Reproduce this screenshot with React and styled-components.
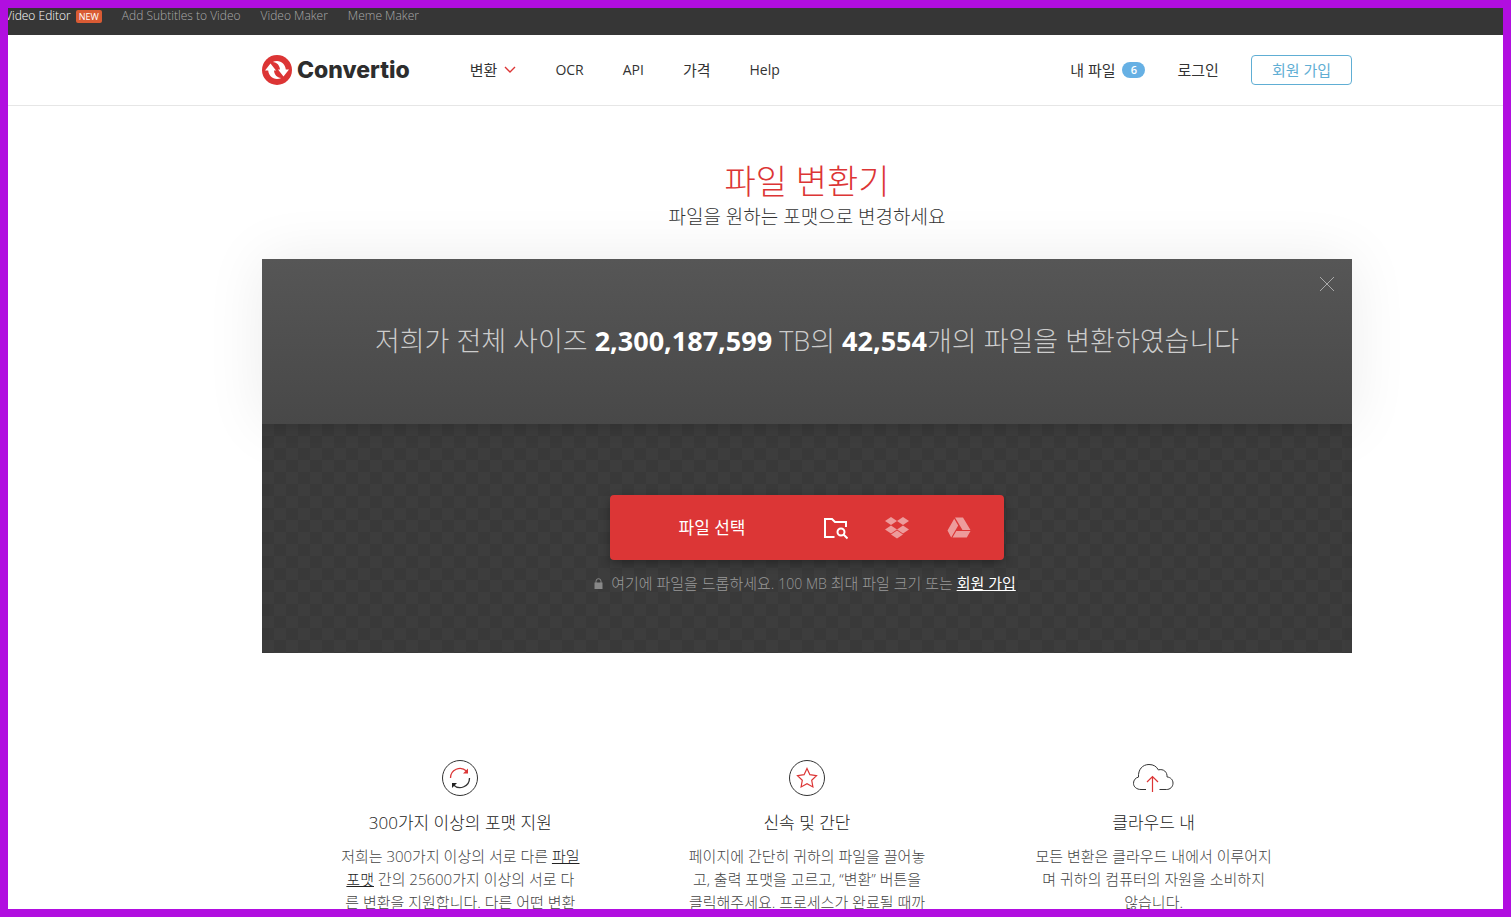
import React from 'react';
import styled, { createGlobalStyle } from 'styled-components';

const GlobalStyle = createGlobalStyle`
  * {
    box-sizing: border-box;
  }
  body {
    margin: 0;
    color: #333;
    background: #fff;
    font-family: 'Open Sans', 'Noto Sans CJK KR', sans-serif;
    font-size: 14px;
    font-weight: 300;
  }
  a {
    color: inherit;
    text-decoration: none;
  }
  h1, h2, h3, p {
    margin: 0;
    font-weight: 300;
  }
  button {
    padding: 0;
    border: 0;
    background: none;
    color: inherit;
    font: inherit;
    cursor: pointer;
  }
`;

const Frame = styled.div`
  height: 100vh;
  overflow: hidden;
  border: 8px solid #b10ee0;
`;

const TopBar = styled.nav`
  display: flex;
  align-items: flex-start;
  gap: 20px;
  height: 27px;
  padding-left: 5px;
  margin-left: -8px;
  background: #363636;
  font-size: 12px;
  line-height: 16px;
`;

const TopLink = styled.a`
  display: flex;
  align-items: center;
  gap: 5px;
  color: ${(props) => (props.$active ? '#fff' : '#aaa')};
`;

const NewBadge = styled.span`
  padding: 0 3px;
  border-radius: 2px;
  background: #d95b34;
  color: #fff;
  font-size: 9px;
  font-weight: 500;
  line-height: 13px;
`;

const Header = styled.header`
  padding-left: 103px;
  border-bottom: 1px solid #e6e6e6;
`;

const Container = styled.div`
  width: 100%;
  max-width: 1090px;
  margin: 0 auto;
`;

const HeaderRow = styled(Container)`
  display: flex;
  align-items: center;
  height: 70px;
  font-weight: 400;
`;

const Logo = styled.a`
  display: flex;
  align-items: center;
  gap: 5px;
  margin-right: 60px;
  color: #2d2d2d;
  font-family: Inter, sans-serif;
  font-size: 23px;
  font-weight: 800;
  line-height: 30px;
`;

const Menu = styled.nav`
  display: flex;
  flex: 1;
  align-items: center;
  gap: 39px;
`;

const MenuLink = styled.a`
  display: flex;
  align-items: center;
  gap: 7px;
  font-size: ${(props) => (props.$hangul ? '15px' : '14px')};
  line-height: 18px;
`;

const Account = styled.div`
  display: flex;
  align-items: center;
  gap: 32px;
`;

const CountBadge = styled.span`
  width: 23px;
  border-radius: 8px;
  background: #66b0e4;
  color: #fff;
  font-size: 11px;
  font-weight: 600;
  line-height: 16px;
  text-align: center;
`;

const SignUp = styled.a`
  padding: 0 20px;
  border: 1px solid #60aed4;
  border-radius: 4px;
  color: #60aed4;
  font-size: 15px;
  line-height: 28px;
`;

const Content = styled.main`
  padding-left: 103px;
`;

const Intro = styled.section`
  padding: 50px 0 31px;
  text-align: center;
`;

const Title = styled.h1`
  color: #dc3535;
  font-size: 34px;
  line-height: 50px;
`;

const Subtitle = styled.p`
  color: #333;
  font-size: 19px;
  line-height: 22px;
`;

const Stats = styled.section`
  position: relative;
  z-index: 1;
  padding: 62px 0 63px;
  background: linear-gradient(#565656, #484848);
  box-shadow: 0 0 60px rgba(0, 0, 0, 0.08);
  color: #ccc;
  font-size: 27px;
  line-height: 40px;
  text-align: center;

  strong {
    color: #fff;
    font-weight: 700;
  }
`;

const CloseButton = styled.button`
  position: absolute;
  top: 17px;
  right: 17px;
  display: flex;
`;

const Converter = styled.section`
  position: relative;
  z-index: 2;
  display: flex;
  flex-direction: column;
  align-items: center;
  padding: 71px 0 58px;
  background: repeating-conic-gradient(#393939 0% 25%, #3d3d3d 0% 50%) 0 0 / 24px 24px;
  box-shadow: inset 0 12px 16px -8px rgba(0, 0, 0, 0.15);
`;

const Picker = styled.div`
  display: flex;
  align-items: center;
  width: 394px;
  height: 65px;
  margin-bottom: 12px;
  border-radius: 4px;
  background: #dc3636;
  box-shadow: 0 4px 10px rgba(0, 0, 0, 0.3);
  color: #fff;
`;

const PickButton = styled.button`
  flex: 1;
  height: 100%;
  padding: 0 0 2px 10px;
  font-size: 17px;
  font-weight: 400;
`;

const SourceButton = styled.button`
  display: flex;
  align-items: center;
  justify-content: center;
  width: 62px;
  height: 100%;
  opacity: ${(props) => (props.$active ? 1 : 0.5)};

  &:last-child {
    margin-right: 14px;
  }
`;

const DropNote = styled.p`
  display: flex;
  align-items: center;
  gap: 8px;
  height: 23px;
  padding-right: 4px;
  color: #999;
  font-size: 15px;
  line-height: 23px;

  a {
    color: #fff;
    font-weight: 400;
    text-decoration: underline;
  }
`;

const SizeLimit = styled.span`
  font-size: 14px;
`;

const Features = styled(Container)`
  display: grid;
  grid-template-columns: repeat(3, 1fr);
  padding: 107px 25px 0;
  text-align: center;
`;

const Feature = styled.article`
  display: flex;
  flex-direction: column;
  align-items: center;
`;

const FeatureTitle = styled.h3`
  margin: 15px 0 10px;
  color: #222;
  font-size: 17px;
  line-height: 24px;
`;

const FeatureText = styled.p`
  color: #444;
  font-size: 15px;
  line-height: 23px;
  white-space: nowrap;

  a {
    color: #222;
    text-decoration: underline;
  }
`;

const LogoIcon = () => (
  <svg width="30" height="30" viewBox="0 0 30 30">
    <circle cx="15" cy="15" r="15" fill="#dc3535" />
    <path
      fill="#fff"
      d="M8.500 8.500 3 15.500h3.200c.4 4.800 4 8.500 8.800 8.500 1.600 0 3-.4 4.200-1-4.200-.4-7-3.400-7.200-7.500H14zM21.500 21.500 27 14.500h-3.200C23.400 9.700 19.800 6 15 6c-1.600 0-3 .4-4.200 1 4.200.4 7 3.400 7.200 7.500H16z"
    />
  </svg>
);

const ChevronIcon = () => (
  <svg width="12" height="8" viewBox="0 0 12 8" fill="none" stroke="#dc3535" strokeWidth="1.4">
    <path d="m1 1 5 5 5-5" />
  </svg>
);

const CloseIcon = () => (
  <svg width="16" height="16" viewBox="0 0 16 16" stroke="#aaa">
    <path d="m1 1 14 14M15 1 1 15" />
  </svg>
);

const FolderIcon = () => (
  <svg width="26" height="24" viewBox="0 0 26 24" fill="none" stroke="#fff" strokeWidth="2">
    <path d="M12.500 21H3V3h7l3 3h11v5" />
    <circle cx="19" cy="16" r="3.500" />
    <path d="m21.500 18.500 4 4" />
  </svg>
);

const DropboxIcon = () => (
  <svg width="26" height="22" viewBox="0 0 26 22" fill="#fff">
    <path d="m7 0 6 4-6 4-6-4zM19 0l6 4-6 4-6-4zM7 8.500l6 4-6 4-6-4zM19 8.500l6 4-6 4-6-4zM13 13.500l6 4-6 4-6-4z" />
  </svg>
);

const DriveIcon = () => (
  <svg width="24" height="21" viewBox="0 0 24 21" fill="#fff">
    <path d="M8 .5h8l7.500 12.500h-8zM7.200 1.700l4 6.800L4.200 20.500.5 13.500zM9.300 14H23.500l-3.700 6.500H5.500z" />
  </svg>
);

const LockIcon = () => (
  <svg width="9" height="11" viewBox="0 0 9 11">
    <path d="M2 5V3.200a2.500 2.500 0 0 1 5 0V5" fill="none" stroke="#888" />
    <path d="M.5 4.500h8V11h-8z" fill="#888" />
  </svg>
);

const FormatsIcon = () => (
  <svg width="36" height="36" viewBox="0 0 36 36" fill="none">
    <circle cx="18" cy="18" r="17.500" stroke="#333" />
    <path d="M8.500 18a9.500 9.500 0 0 1 16-7" stroke="#dc3535" strokeWidth="1.3" />
    <path d="M26 8.500V13.500h-5z" fill="#dc3535" />
    <path d="M27.500 18a9.500 9.500 0 0 1-16 7" stroke="#333" strokeWidth="1.3" />
    <path d="M10 28v-5h5z" fill="#222" />
  </svg>
);

const StarIcon = () => (
  <svg width="36" height="36" viewBox="0 0 36 36" fill="none">
    <circle cx="18" cy="18" r="17.500" stroke="#333" />
    <path
      d="m18 8.500 2.900 6.200 6.600.9-4.800 4.700 1.200 6.700-5.900-3.200-5.900 3.200 1.200-6.700-4.800-4.700 6.600-.9z"
      stroke="#dc3535"
      strokeWidth="1.2"
    />
  </svg>
);

const CloudIcon = () => (
  <svg width="42" height="36" viewBox="0 0 42 36" fill="none">
    <path
      d="M13 29.500H8C3.800 29.500.5 27 .5 23.300c0-3.300 2.200-5.600 5-6.200C5 9.500 9.500 4.500 16 4.500c4.500 0 7.700 2 9.300 5.400 5.200-1.400 9.200 2.200 8.700 7 3.600.4 6 2.900 6 6.200 0 3.900-3 6.400-6.500 6.400h-7"
      stroke="#333"
    />
    <path d="M19.500 32V16.500M14 22l5.500-5.500L25 22" stroke="#dc3535" strokeWidth="1.2" />
  </svg>
);

export default function App() {
  return (
    <Frame>
      <GlobalStyle />
      <TopBar>
        <TopLink href="#" $active>
          Video Editor <NewBadge>NEW</NewBadge>
        </TopLink>
        <TopLink href="#">Add Subtitles to Video</TopLink>
        <TopLink href="#">Video Maker</TopLink>
        <TopLink href="#">Meme Maker</TopLink>
      </TopBar>
      <Header>
        <HeaderRow>
          <Logo href="#">
            <LogoIcon />
            Convertio
          </Logo>
          <Menu>
            <MenuLink href="#" $hangul>
              변환
              <ChevronIcon />
            </MenuLink>
            <MenuLink href="#">OCR</MenuLink>
            <MenuLink href="#">API</MenuLink>
            <MenuLink href="#" $hangul>
              가격
            </MenuLink>
            <MenuLink href="#">Help</MenuLink>
          </Menu>
          <Account>
            <MenuLink href="#" $hangul>
              내 파일 <CountBadge>6</CountBadge>
            </MenuLink>
            <MenuLink href="#" $hangul>
              로그인
            </MenuLink>
            <SignUp href="#">회원 가입</SignUp>
          </Account>
        </HeaderRow>
      </Header>
      <Content>
        <Intro>
          <Title>파일 변환기</Title>
          <Subtitle>파일을 원하는 포맷으로 변경하세요</Subtitle>
        </Intro>
        <Container>
          <Stats>
            저희가 전체 사이즈 <strong>2,300,187,599</strong> TB의 <strong>42,554</strong>
            개의 파일을 변환하였습니다
            <CloseButton aria-label="닫기">
              <CloseIcon />
            </CloseButton>
          </Stats>
          <Converter>
            <Picker>
              <PickButton>파일 선택</PickButton>
              <SourceButton $active aria-label="파일">
                <FolderIcon />
              </SourceButton>
              <SourceButton aria-label="Dropbox">
                <DropboxIcon />
              </SourceButton>
              <SourceButton aria-label="Google Drive">
                <DriveIcon />
              </SourceButton>
            </Picker>
            <DropNote>
              <LockIcon />
              <span>
                여기에 파일을 드롭하세요. <SizeLimit>100 MB</SizeLimit> 최대 파일 크기 또는{' '}
                <a href="#">회원 가입</a>
              </span>
            </DropNote>
          </Converter>
        </Container>
        <Features>
          <Feature>
            <FormatsIcon />
            <FeatureTitle>300가지 이상의 포맷 지원</FeatureTitle>
            <FeatureText>
              저희는 300가지 이상의 서로 다른 <a href="#">파일</a>
              <br />
              <a href="#">포맷</a> 간의 25600가지 이상의 서로 다<br />
              른 변환을 지원합니다. 다른 어떤 변환
            </FeatureText>
          </Feature>
          <Feature>
            <StarIcon />
            <FeatureTitle>신속 및 간단</FeatureTitle>
            <FeatureText>
              페이지에 간단히 귀하의 파일을 끌어놓
              <br />
              고, 출력 포맷을 고르고, “변환” 버튼을
              <br />
              클릭해주세요. 프로세스가 완료될 때까
            </FeatureText>
          </Feature>
          <Feature>
            <CloudIcon />
            <FeatureTitle>클라우드 내</FeatureTitle>
            <FeatureText>
              모든 변환은 클라우드 내에서 이루어지
              <br />
              며 귀하의 컴퓨터의 자원을 소비하지
              <br />
              않습니다.
            </FeatureText>
          </Feature>
        </Features>
      </Content>
    </Frame>
  );
}
